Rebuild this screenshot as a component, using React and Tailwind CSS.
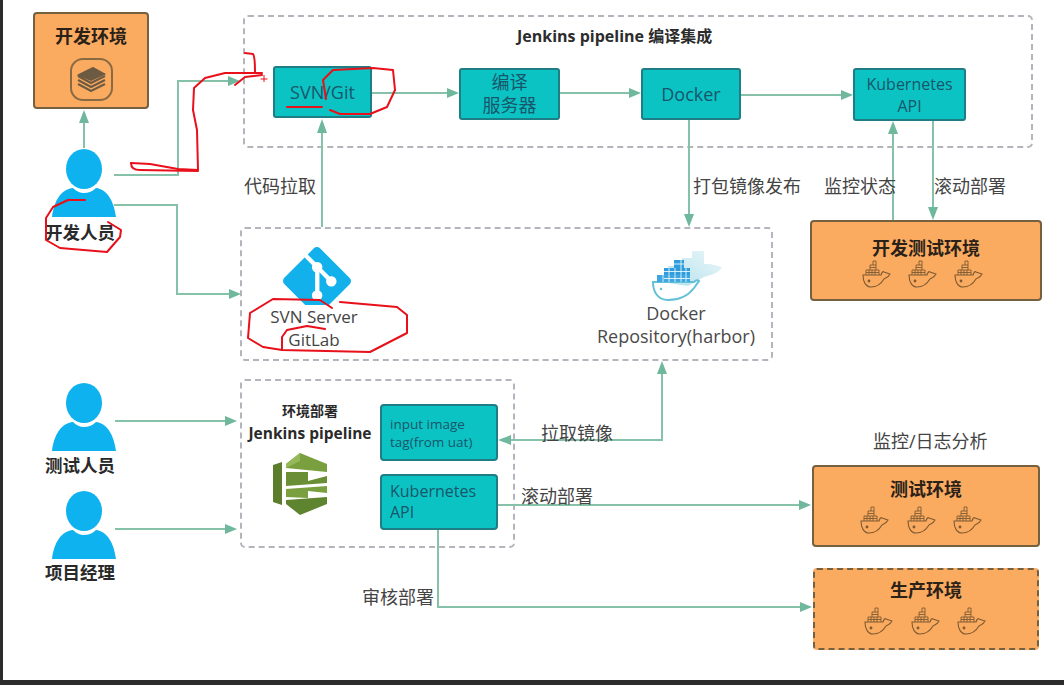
import { SiGit } from "react-icons/si";

const CJK = "font-['Open_Sans','Noto_Sans_CJK_SC',sans-serif]";

const Person = ({ className }) => (
  <svg className={`absolute ${className}`} width="66" height="68" viewBox="0 0 66 68">
    <ellipse cx="33" cy="20" rx="18" ry="20" fill="#0eb2ee" />
    <path d="M1 68C3 52 10 40 22 39C26 43 30 44 33 44C37 44 41 43 45 39C56 40 63 52 65 68Z" fill="#0eb2ee" />
  </svg>
);

const Whale = ({ className }) => (
  <svg className={`absolute ${className}`} width="29" height="28" viewBox="0 0 29 28" fill="none" stroke="#7d5a32" strokeWidth="1.1">
    <path d="M1 15H19C20 12 21 11 22 12L28 14C26 18 23 18 22 19C19 24 14 27 9 27C4 27 1 22 1 15Z" />
    <path d="M4 15V10H17V15M8 10V5H14V10M11 5V1H14V5M4 12.5H17M8 7.5H14M7 10V15M10 10V15M13 10V15" strokeWidth="0.9" />
    <circle cx="7" cy="21" r="0.9" fill="#7d5a32" />
  </svg>
);

const lines = [
  "M84 148V122",
  "M114 175H178V81H230",
  "M114 205H177V294H230",
  "M322 227V132",
  "M372 93H448",
  "M560 93H630",
  "M741 95H842",
  "M689 120V215",
  "M893 220V132",
  "M933 121V209",
  "M115 421H226",
  "M115 529H226",
  "M662 373V440H510",
  "M498 505H800",
  "M438 530V607H801",
];

const heads = [
  "M84 110L79 123H89Z",
  "M240 81L228 76V86Z",
  "M241 294L229 289V299Z",
  "M322 119L317 133H327Z",
  "M459 93L447 88V98Z",
  "M641 93L629 88V98Z",
  "M853 95L841 90V100Z",
  "M689 227L684 214H694Z",
  "M893 121L888 134H898Z",
  "M933 220L928 207H938Z",
  "M237 421L225 416V426Z",
  "M237 529L225 524V534Z",
  "M662 361L657 374H667Z",
  "M498 440L511 435V445Z",
  "M811 505L799 500V510Z",
  "M812 607L800 602V612Z",
];

// Red pen marks on top of the diagram
const pen = [
  "M245 53L253 54Q255 56 255 72",
  "M131 163L150 164L178 169L198 170L197 130L193 110L194 88L205 78L225 73L262 73",
  "M262 75L245 77L235 85",
  "M131 163Q131 170 140 170L198 171",
  "M326 99L323 80L333 70L373 68L393 70L395 90L387 107L370 114L340 114L330 110",
  "M287 107L322 107",
  "M85 200L68 200L53 207L46 218L46 240L60 248L107 252L120 237L121 230L108 222",
  "M332 308L320 300L273 299L250 313L248 338L263 347L282 350L370 352L407 333L407 315L397 307L340 302",
  "M325 329L307 326L287 330L282 337L282 350",
];

export default function App() {
  return (
    <div className={`flex flex-col w-[1064px] h-[685px] bg-[#2b2b2b] overflow-hidden ${CJK}`}>
      <div className="flex flex-1">
        <div className="w-[3px] bg-[#2b2b2b]" />
        <div className="relative flex-1 bg-white">
          {/* dashed groups */}
          <div className="absolute left-[240px] top-[15px] w-[790px] h-[133px] border-2 border-dashed border-[#b4b4bc] rounded-[5px]" />
          <div className="absolute left-[237px] top-[227px] w-[533px] h-[134px] border-2 border-dashed border-[#b4b4bc] rounded-[5px]" />
          <div className="absolute left-[237px] top-[379px] w-[275px] h-[169px] border-2 border-dashed border-[#b4b4bc] rounded-[5px]" />

          <svg className="absolute left-0 top-0" width="1061" height="680" viewBox="3 0 1061 680" fill="none">
            {lines.map((d) => (
              <path key={d} d={d} stroke="#86c2aa" strokeWidth="2" />
            ))}
            {heads.map((d) => (
              <path key={d} d={d} fill="#6fb89d" />
            ))}
          </svg>

          {/* dev env */}
          <div className="absolute left-[30px] top-[12px] w-[116px] h-[97px] flex flex-col items-center bg-[#fbab60] border-2 border-[#75603f] rounded-[4px]">
            <span className="mt-[9px] text-[18px] leading-[26px] font-bold text-[#2a2118]">开发环境</span>
            <div className="mt-[9px] w-[43px] h-[43px] flex items-center justify-center border-2 border-[#8a6a42] rounded-[13px]">
              <svg width="29" height="25" viewBox="0 0 29 25" fill="none" stroke="#6d5a42" strokeWidth="2">
                <path d="M1 13L14 20L28 13" />
                <path d="M1 17L14 24L28 17" />
                <path d="M1 9L14 16L28 9" />
                <path d="M2 8L16 1L27 7L14 13Z" fill="#6d5a42" />
              </svg>
            </div>
          </div>

          <span className="absolute left-[514px] top-[24px] text-[16px] leading-[24px] font-bold text-[#2c2c2c] whitespace-nowrap">Jenkins pipeline 编译集成</span>

          {/* teal nodes */}
          <div className="absolute left-[270px] top-[66px] w-[99px] h-[52px] flex items-center justify-center bg-[#0cc3c3] border-2 border-[#1f7d86] rounded-[3px] text-[18px] text-[#17566b]">SVN/Git</div>
          <div className="absolute left-[456px] top-[68px] w-[101px] h-[52px] flex items-center justify-center text-center bg-[#0cc3c3] border-2 border-[#1f7d86] rounded-[3px] text-[18px] leading-[23px] text-[#17566b]">编译<br />服务器</div>
          <div className="absolute left-[638px] top-[68px] w-[100px] h-[52px] flex items-center justify-center bg-[#0cc3c3] border-2 border-[#1f7d86] rounded-[3px] text-[18px] text-[#17566b]">Docker</div>
          <div className="absolute left-[850px] top-[68px] w-[113px] h-[53px] flex items-center justify-center text-center bg-[#0cc3c3] border-2 border-[#1f7d86] rounded-[3px] text-[16px] leading-[22px] text-[#17566b]">Kubernetes<br />API</div>
          <div className="absolute left-[377px] top-[404px] w-[118px] h-[57px] flex items-center pl-[8px] bg-[#0cc3c3] border-2 border-[#1f7d86] rounded-[4px] text-[13.5px] leading-[18px] text-[#17566b]">input image<br />tag(from uat)</div>
          <div className="absolute left-[377px] top-[474px] w-[118px] h-[56px] flex items-center pl-[8px] bg-[#0cc3c3] border-2 border-[#1f7d86] rounded-[4px] text-[16px] leading-[21px] text-[#17566b]">Kubernetes<br />API</div>

          {/* people */}
          <Person className="left-[48px] top-[149px]" />
          <span className="absolute left-[42px] top-[219px] text-[17.5px] leading-[26px] font-bold text-[#2a2a2a]">开发人员</span>
          <Person className="left-[48px] top-[383px]" />
          <span className="absolute left-[42px] top-[452px] text-[17.5px] leading-[26px] font-bold text-[#2a2a2a]">测试人员</span>
          <Person className="left-[48px] top-[491px]" />
          <span className="absolute left-[42px] top-[559px] text-[17.5px] leading-[26px] font-bold text-[#2a2a2a]">项目经理</span>

          {/* flow labels */}
          <span className="absolute left-[241px] top-[174px] text-[18px] leading-[24px] text-[#444]">代码拉取</span>
          <span className="absolute left-[690px] top-[174px] text-[18px] leading-[24px] text-[#444]">打包镜像发布</span>
          <span className="absolute left-[821px] top-[174px] text-[18px] leading-[24px] text-[#444]">监控状态</span>
          <span className="absolute left-[931px] top-[174px] text-[18px] leading-[24px] text-[#444]">滚动部署</span>
          <span className="absolute left-[538px] top-[421px] text-[18px] leading-[24px] text-[#444]">拉取镜像</span>
          <span className="absolute left-[518px] top-[484px] text-[18px] leading-[24px] text-[#444]">滚动部署</span>
          <span className="absolute left-[359px] top-[585px] text-[18px] leading-[24px] text-[#444]">审核部署</span>
          <span className="absolute left-[870px] top-[429px] text-[18px] leading-[24px] text-[#444]">监控/日志分析</span>

          {/* gitlab */}
          <SiGit className="absolute left-[280px] top-[247px] text-[#12b1ec]" size={68} />
          <div className="absolute left-[245px] top-[305px] w-[132px] text-center text-[17px] leading-[23px] text-[#444] bg-white">SVN Server<br />GitLab</div>

          {/* docker repo */}
          <svg className="absolute left-[645px] top-[250px]" width="78" height="52" viewBox="0 0 78 52" fill="none">
            <defs>
              <linearGradient id="fade" x1="0" y1="1" x2="1" y2="0">
                <stop offset="0" stopColor="#b5e2ee" />
                <stop offset="1" stopColor="#eaf6f8" />
              </linearGradient>
            </defs>
            <path d="M20 33V16H34V8H44V1H56V14H62L74 17C70 24 62 25 56 27L40 36Z" fill="url(#fade)" />
            <path d="M5 32H46C48 30 50 30 51 31L46 38C40 46 30 50 20 50C10 50 5 42 5 32Z" stroke="#63c0d6" strokeWidth="2" />
            <rect x="9" y="25" width="33" height="7" fill="#3ea6e0" />
            <rect x="16" y="18" width="26" height="7" fill="#2f9cdc" />
            <rect x="26" y="10" width="10" height="8" fill="#2f9cdc" />
            <path d="M15 25V32M21 18V32M27 18V32M33 10V32M38 18V32M16 28.500H42M16 21.500H42M26 14H36" stroke="#e8f7fb" strokeWidth="0.9" />
            <circle cx="13" cy="39" r="1.300" fill="#63c0d6" />
          </svg>
          <div className="absolute left-[578px] top-[302px] w-[190px] text-center text-[18px] leading-[23px] text-[#4a4a4a]">Docker<br />Repository(harbor)</div>

          {/* deploy group */}
          <div className="absolute left-[234px] top-[399px] w-[146px] text-center text-[15.5px] leading-[23px] font-bold text-[#2a2a2a] whitespace-nowrap"><span className="text-[14px]">环境部署</span><br />Jenkins pipeline</div>
          <svg className="absolute left-[270px] top-[453px]" width="54" height="62" viewBox="0 0 54 62">
            <path d="M0 12L9 9V52L0 49Z" fill="#5b7d2c" />
            <path d="M13 11L27 0L54 11V19L13 15Z" fill="#7a9f3e" />
            <path d="M13 11L27 0V8L13 15Z" fill="#94b85a" />
            <path d="M13 19H35V28L54 23V30L13 33Z" fill="#6a8e36" />
            <path d="M13 36L54 33V40L35 38V45L13 44Z" fill="#7a9f3e" />
            <path d="M13 47L54 44V51L27 62L13 51Z" fill="#5f8430" />
          </svg>

          {/* environments */}
          <div className="absolute left-[807px] top-[220px] w-[232px] h-[81px] bg-[#fbab60] border-2 border-[#75603f] rounded-[4px] pt-[13px] text-center text-[18px] leading-[26px] font-bold text-[#2a2118]">开发测试环境</div>
          <Whale className="left-[859px] top-[260px]" />
          <Whale className="left-[905px] top-[260px]" />
          <Whale className="left-[951px] top-[260px]" />

          <div className="absolute left-[809px] top-[465px] w-[228px] h-[82px] bg-[#fbab60] border-2 border-[#75603f] rounded-[4px] pt-[9px] text-center text-[18px] leading-[26px] font-bold text-[#2a2118]">测试环境</div>
          <Whale className="left-[857px] top-[506px]" />
          <Whale className="left-[904px] top-[506px]" />
          <Whale className="left-[950px] top-[506px]" />

          <div className="absolute left-[810px] top-[568px] w-[226px] h-[82px] bg-[#fbab60] border-2 border-dashed border-[#75603f] rounded-[4px] pt-[7px] text-center text-[18px] leading-[26px] font-bold text-[#2a2118]">生产环境</div>
          <Whale className="left-[861px] top-[607px]" />
          <Whale className="left-[908px] top-[607px]" />
          <Whale className="left-[954px] top-[607px]" />

          <svg className="absolute left-0 top-0 pointer-events-none" width="1061" height="680" viewBox="3 0 1061 680" fill="none">
            {pen.map((d) => (
              <path key={d} d={d} stroke="#e8101a" strokeWidth="2" strokeLinejoin="round" strokeLinecap="round" />
            ))}
            <path d="M264 75V82M260.500 79H267.500" stroke="#e8101a" strokeWidth="1" />
          </svg>
        </div>
      </div>
      <div className="h-[5px] bg-[#2b2b2b]" />
    </div>
  );
}
